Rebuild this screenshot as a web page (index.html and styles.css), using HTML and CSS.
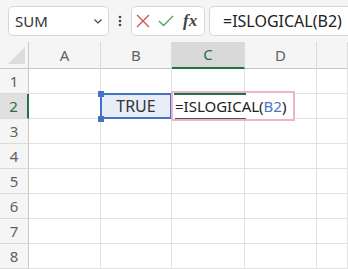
FILE: index.html
```html
<!DOCTYPE html>
<html lang="en">
<head>
  <meta charset="UTF-8">
  <title>ISLOGICAL</title>
  <link rel="stylesheet" href="styles.css">
</head>
<body>
  <div class="app">
    <div class="toolbar">
      <div class="namebox">
        <span>SUM</span>
        <svg class="chev" width="8" height="5" viewBox="0 0 8 5"><path d="M0.5 0.5 L4 4 L7.5 0.5" fill="none" stroke="#444" stroke-width="1.2"/></svg>
      </div>
      <svg class="more" width="4" height="12" viewBox="0 0 4 12">
        <circle cx="2" cy="2" r="1.3" fill="#444"/>
        <circle cx="2" cy="6" r="1.3" fill="#444"/>
        <circle cx="2" cy="10" r="1.3" fill="#444"/>
      </svg>
      <div class="fbtns">
        <svg width="14" height="14" viewBox="0 0 14 14"><path d="M1 1 L13 13 M13 1 L1 13" stroke="#d9534f" stroke-width="1.4"/></svg>
        <svg width="16" height="12" viewBox="0 0 16 12"><path d="M1 6 L5.5 10.5 L15 1" fill="none" stroke="#4fa562" stroke-width="1.4"/></svg>
        <span class="fx">fx</span>
      </div>
      <div class="formula">=ISLOGICAL(B2)</div>
    </div>

    <div class="sheet">
      <div class="corner"><span class="tri"></span></div>
      <div class="colhead">A</div>
      <div class="colhead">B</div>
      <div class="colhead active">C</div>
      <div class="colhead">D</div>
      <div class="colhead"></div>

      <div class="rowhead">1</div><div class="cell"></div><div class="cell"></div><div class="cell"></div><div class="cell"></div><div class="cell"></div>
      <div class="rowhead active">2</div><div class="cell"></div><div class="cell b2">TRUE</div><div class="cell"></div><div class="cell"></div><div class="cell"></div>
      <div class="rowhead">3</div><div class="cell"></div><div class="cell"></div><div class="cell"></div><div class="cell"></div><div class="cell"></div>
      <div class="rowhead">4</div><div class="cell"></div><div class="cell"></div><div class="cell"></div><div class="cell"></div><div class="cell"></div>
      <div class="rowhead">5</div><div class="cell"></div><div class="cell"></div><div class="cell"></div><div class="cell"></div><div class="cell"></div>
      <div class="rowhead">6</div><div class="cell"></div><div class="cell"></div><div class="cell"></div><div class="cell"></div><div class="cell"></div>
      <div class="rowhead">7</div><div class="cell"></div><div class="cell"></div><div class="cell"></div><div class="cell"></div><div class="cell"></div>
      <div class="rowhead">8</div><div class="cell"></div><div class="cell"></div><div class="cell"></div><div class="cell"></div><div class="cell"></div>

      <div class="selbox"></div>
      <span class="handle h-top"></span>
      <span class="handle h-bottom"></span>
      <div class="editor"><span class="edit-top"></span><span class="edit-bottom"></span>=ISLOGICAL(<span class="ref">B2</span>)</div>
    </div>
  </div>
</body>
</html>
```

FILE: styles.css
```css
* {
    margin: 0;
    padding: 0;
    box-sizing: border-box;
}
body {
    width: 348px;
    height: 269px;
    overflow: hidden;
    background: #f5f5f5;
    font-family: "Noto Sans", "Liberation Sans", sans-serif;
    color: #222;
}
.app {
    width: 348px;
}
.toolbar {
    height: 42px;
    display: flex;
    align-items: flex-start;
    padding: 6px 0 0 8px;
    white-space: nowrap;
}
.toolbar > * {
    flex-shrink: 0;
}
.namebox {
    width: 101px;
    height: 30px;
    background: #fff;
    border: 1px solid #d6d6d6;
    border-radius: 5px;
    display: flex;
    align-items: center;
    justify-content: space-between;
    padding: 0 6px 0 6px;
    font-size: 15px;
    color: #333;
}
.chev {
    margin-top: 1px;
}
.more {
    margin: 9px 9px 0 9px;
}
.fbtns {
    width: 74px;
    height: 30px;
    background: #fff;
    border: 1px solid #d6d6d6;
    border-radius: 5px;
    display: flex;
    align-items: center;
    gap: 8px;
    padding-left: 4px;
}
.fx {
    font-family: "Liberation Serif", "DejaVu Serif", serif;
    font-style: italic;
    font-weight: bold;
    font-size: 17px;
    color: #444;
    margin-left: 1px;
}
.formula {
    flex: 1 1 auto;
    margin-left: 4px;
    height: 30px;
    background: #fff;
    border: 1px solid #d6d6d6;
    border-right: none;
    border-radius: 5px 0 0 5px;
    padding-left: 13px;
    font-size: 16px;
    line-height: 28px;
    color: #222;
}
.sheet {
    position: relative;
    display: grid;
    grid-template-columns: 29px 72px 71px 73px 72px 1fr;
    grid-template-rows: 27px repeat(8, 25px);
    background: #fff;
}
.corner {
    background: #f5f5f5;
    border-right: 1px solid #c8c8c8;
    border-bottom: 1px solid #c8c8c8;
    position: relative;
}
.tri {
    position: absolute;
    right: 3px;
    bottom: 4px;
    width: 0;
    height: 0;
    border-left: 17px solid transparent;
    border-bottom: 17px solid #dcdcdc;
}
.colhead {
    background: #f5f5f5;
    border-right: 1px solid #dadada;
    border-bottom: 1px solid #c8c8c8;
    text-align: center;
    font-size: 15px;
    line-height: 26px;
    color: #5f5f5f;
}
.colhead.active {
    background: #d9d9d9;
    color: #1e6f45;
    border-bottom: 2px solid #217346;
    line-height: 25px;
}
.rowhead {
    background: #f5f5f5;
    border-right: 1px solid #c8c8c8;
    border-bottom: 1px solid #dadada;
    text-align: center;
    font-size: 15px;
    line-height: 24px;
    color: #5f5f5f;
}
.rowhead.active {
    background: #e0e0e0;
    color: #2e6b48;
    border-right: 2px solid #217346;
}
.cell {
    border-right: 1px solid #e1e1e1;
    border-bottom: 1px solid #e1e1e1;
    font-size: 15px;
    line-height: 24px;
}
.cell.b2 {
    background: #e8eef8;
    text-align: center;
    color: #333;
    font-size: 16px;
}
.selbox {
    position: absolute;
    left: 100px;
    top: 51px;
    width: 72px;
    height: 26px;
    border: 2px solid #4472c4;
}
.handle {
    position: absolute;
    width: 6px;
    height: 6px;
    background: #4472c4;
    left: 98px;
}
.h-top {
    top: 49px;
}
.h-bottom {
    top: 74px;
}
.editor {
    position: absolute;
    left: 171px;
    top: 49px;
    width: 124px;
    height: 30px;
    background: #fff;
    border: 2px solid #f1b0cd;
    padding-left: 2px;
    font-size: 15px;
    line-height: 26px;
    color: #222;
    white-space: nowrap;
}
.ref {
    color: #4a78c2;
}
.edit-top {
    position: absolute;
    left: 1px;
    top: 0;
    width: 72px;
    height: 2px;
    background: #217346;
}
.edit-bottom {
    position: absolute;
    left: 2px;
    bottom: 0;
    width: 71px;
    height: 1px;
    background: #555;
}
```
